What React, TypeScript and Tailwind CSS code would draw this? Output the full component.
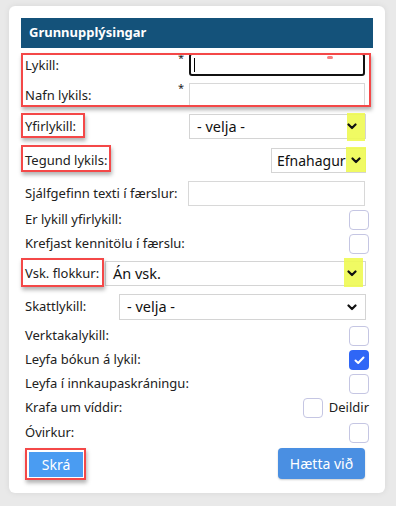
import React from "react"

const font = { fontFamily: '"Noto Sans", "Open Sans", sans-serif' }

function Chevron() {
  return (
    <svg width="10" height="7" viewBox="0 0 10 7" className="shrink-0">
      <path d="M1.5 1.5 L5 5 L8.5 1.5" fill="none" stroke="#111" strokeWidth="2.2" strokeLinecap="round" strokeLinejoin="round" />
    </svg>
  )
}

function Check({ checked = false }: { checked?: boolean }) {
  return checked ? (
    <div className="w-[20px] h-[20px] rounded-[4px] bg-[#2f66f6] flex items-center justify-center">
      <svg width="11" height="9" viewBox="0 0 11 9">
        <path d="M1.5 4.5 L4.2 7 L9.5 1.5" fill="none" stroke="#fff" strokeWidth="2" strokeLinecap="round" strokeLinejoin="round" />
      </svg>
    </div>
  ) : (
    <div className="w-[20px] h-[20px] rounded-[4px] border border-[#c5c6e3] bg-white" />
  )
}

// red annotation outline
function RedBox({ className }: { className: string }) {
  return (
    <div
      className={
        "absolute pointer-events-none border-[2px] border-[#f44848] shadow-[1px_3px_4px_rgba(0,0,0,0.3)] " + className
      }
    />
  )
}

function Yellow({ className }: { className: string }) {
  return <div className={"absolute bg-[#eefa52]/90 " + className} />
}

function Select({ text, className }: { text: string; className: string }) {
  return (
    <div
      className={
        "flex items-center justify-between border border-[#d4d4d4] bg-white pl-[7px] pr-[8px] text-[#111] text-[14.5px] " +
        className
      }
    >
      <span className="whitespace-nowrap">{text}</span>
      <span className="relative z-10">
        <Chevron />
      </span>
    </div>
  )
}

function CheckRow({ label, mt, checked }: { label: string; mt: string; checked?: boolean }) {
  return (
    <div className={"flex items-center justify-between h-[20px] pl-[4px] pr-[4px] " + mt}>
      <span>{label}</span>
      <Check checked={checked} />
    </div>
  )
}

export default function App() {
  return (
    <div className="w-[396px] h-[506px] bg-[#e9e9e9] pt-[6px] pl-[9px] pr-[11px] overflow-hidden" style={font}>
      <div className="bg-white rounded-[6px] shadow-[0_0_6px_rgba(0,0,0,0.08)] px-[12px] pt-[12px] pb-[14px] text-[13px] text-[#212121]">
        {/* Header */}
        <div className="h-[30px] bg-[#14527a] flex items-center pl-[8px] text-white font-bold text-[13px]">
          Grunnupplýsingar
        </div>

        {/* Lykill + Nafn lykils */}
        <div className="relative">
          <div className="flex items-center justify-between h-[23px] mt-[5px] pl-[4px] pr-[8px]">
            <div className="relative flex-1 h-full flex items-center">
              <span className="mt-[3px]">Lykill:</span>
              <span className="absolute right-[5px] top-[-3px] text-[11px]">*</span>
            </div>
            <div className="w-[176px] h-[23px] border-[2px] border-[#111] rounded-[3px] flex items-center pl-[3px]">
              <div className="w-[1px] h-[14px] bg-black" />
            </div>
          </div>
          <div className="flex items-center justify-between h-[23px] mt-[7px] pl-[4px] pr-[8px]">
            <div className="relative flex-1 h-full flex items-center">
              <span className="mt-[3px]">Nafn lykils:</span>
              <span className="absolute right-[5px] top-[-3px] text-[11px]">*</span>
            </div>
            <div className="w-[176px] h-[23px] border border-[#d8d8d8]" />
          </div>
          <RedBox className="left-0 right-[2px] top-0 h-[54px]" />
          <div className="absolute left-[306px] top-[3px] w-[6px] h-[3px] rounded-full bg-[#f44848]/70" />
        </div>

        {/* Yfirlykill */}
        <div className="relative flex items-center justify-between h-[25px] mt-[8px] pl-[4px] pr-[7px]">
          <span>Yfirlykill:</span>
          <Select text="- velja -" className="w-[177px] h-[25px]" />
          <RedBox className="left-0 top-[-1px] w-[64px] h-[25px]" />
          <Yellow className="left-[326px] top-[-1px] w-[18px] h-[28px]" />
        </div>

        {/* Tegund lykils */}
        <div className="relative flex items-center justify-between h-[25px] mt-[9px] pl-[4px] pr-[7px]">
          <span>Tegund lykils:</span>
          <Select text="Efnahagur" className="w-[95px] h-[25px] !pl-[5px] !pr-[4px] !text-[14px]" />
          <RedBox className="left-0 top-[-3px] w-[90px] h-[27px]" />
          <Yellow className="left-[325px] top-[-1px] w-[20px] h-[25px]" />
        </div>

        {/* Sjálfgefinn texti */}
        <div className="flex items-center justify-between h-[25px] mt-[8px] pl-[4px] pr-[8px]">
          <span>Sjálfgefinn texti í færslur:</span>
          <div className="w-[177px] h-[25px] border border-[#d8d8d8]" />
        </div>

        <CheckRow label="Er lykill yfirlykill:" mt="mt-[4px]" />
        <CheckRow label="Krefjast kennitölu í færslu:" mt="mt-[4px]" />

        {/* Vsk. flokkur */}
        <div className="relative flex items-center h-[25px] mt-[7px] pl-[4px] pr-[7px]">
          <span className="w-[80px]">Vsk. flokkur:</span>
          <Select text="Án vsk." className="flex-1 h-[25px]" />
          <Yellow className="left-[323px] top-[-3px] w-[19px] h-[29px]" />
          <RedBox className="left-0 top-[-3px] w-[83px] h-[29px]" />
        </div>

        {/* Skattlykill */}
        <div className="flex items-center h-[26px] mt-[8px] pl-[4px] pr-[7px]">
          <span className="w-[94px]">Skattlykill:</span>
          <Select text="- velja -" className="flex-1 h-[26px]" />
        </div>

        <CheckRow label="Verktakalykill:" mt="mt-[6px]" />
        <CheckRow label="Leyfa bókun á lykil:" mt="mt-[4px]" checked />
        <CheckRow label="Leyfa í innkaupaskráningu:" mt="mt-[4px]" />

        <div className="flex items-center justify-between h-[20px] mt-[4px] pl-[4px] pr-[4px]">
          <span>Krafa um víddir:</span>
          <div className="flex items-center gap-[6px]">
            <Check />
            <span>Deildir</span>
          </div>
        </div>

        <CheckRow label="Óvirkur:" mt="mt-[5px]" />

        {/* Buttons */}
        <div className="flex items-start justify-between h-[31px] mt-[5px] pl-[4px] pr-[8px]">
          <div className="relative p-[4px]">
            <button className="w-[54px] h-[25px] bg-[#4a9cf2] text-white text-[14px] flex items-center justify-center">
              Skrá
            </button>
            <RedBox className="inset-0 h-[32px] w-[61px]" />
          </div>
          <button className="w-[87px] h-[31px] rounded-[4px] bg-[#4a8fe2] text-white text-[14px] shadow-[0_1px_2px_rgba(0,0,0,0.2)]">
            Hætta við
          </button>
        </div>
      </div>
    </div>
  )
}
